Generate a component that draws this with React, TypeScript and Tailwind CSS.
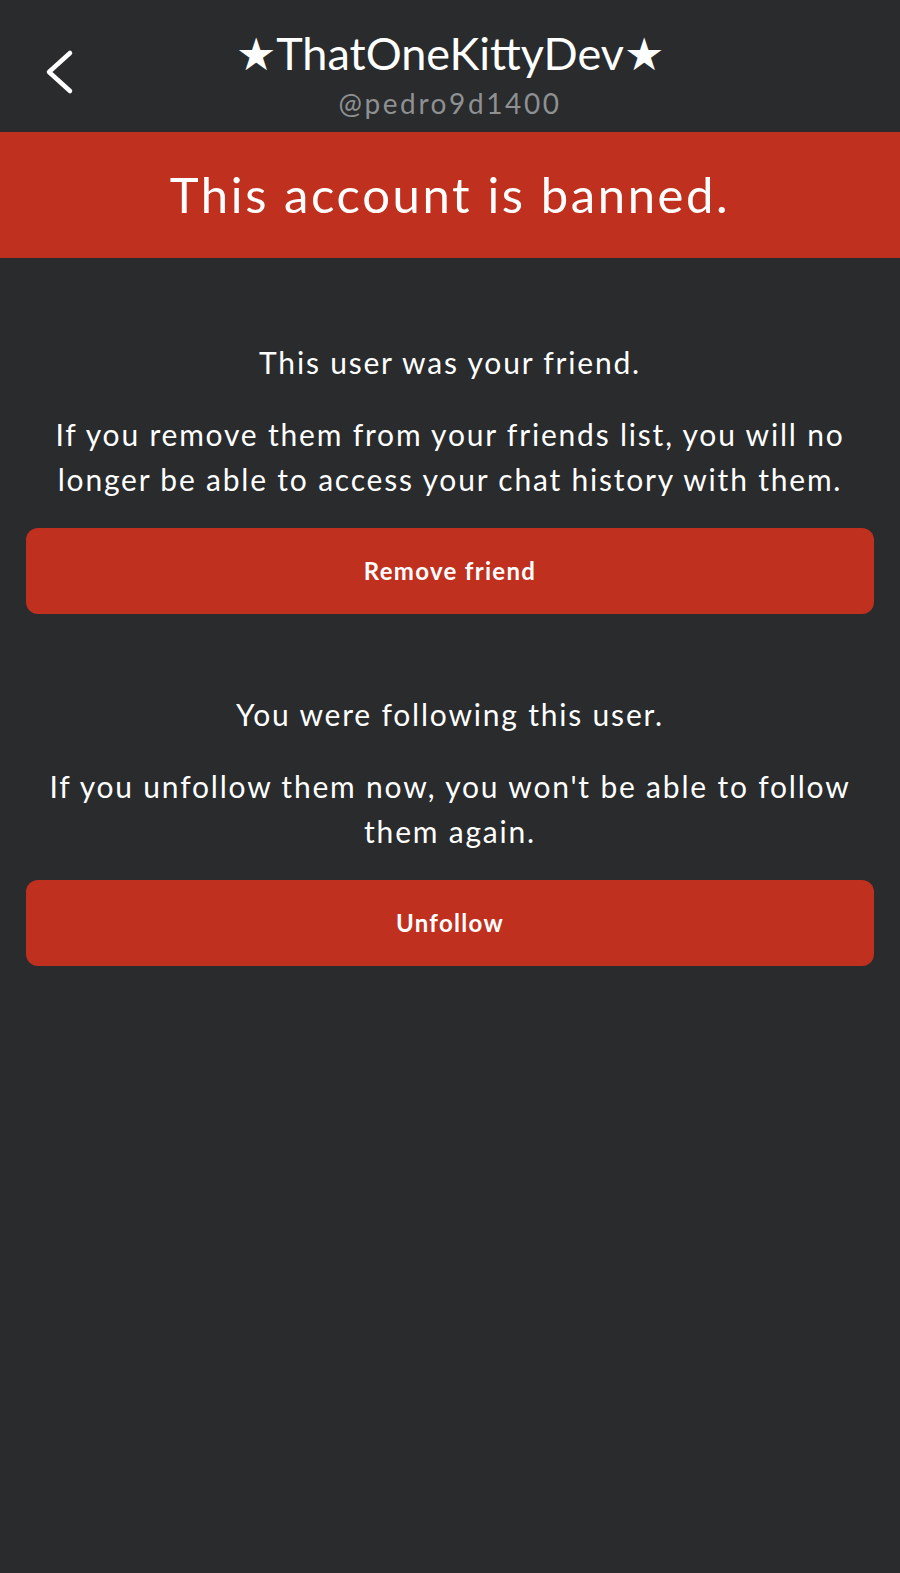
type Section = {
    title: string;
    body: string;
    action: string;
};

const sections: Section[] = [
    {
        title: 'This user was your friend.',
        body: 'If you remove them from your friends list, you will no longer be able to access your chat history with them.',
        action: 'Remove friend',
    },
    {
        title: 'You were following this user.',
        body: "If you unfollow them now, you won't be able to follow them again.",
        action: 'Unfollow',
    },
];

export default function App() {
    return (
        <div
            className="min-h-[1573px] bg-[#292b2d] text-white"
            style={{ fontFamily: 'Lato, "Noto Sans", sans-serif' }}
        >
            {/* Header */}
            <div className="relative flex h-[132px] flex-col items-center pt-[26px]">
                <button className="absolute left-0 top-0 text-white">
                    <svg width="100" height="132" viewBox="0 0 100 132" fill="none">
                        <polyline
                            points="70,53 49,72 70,91"
                            stroke="white"
                            strokeWidth="4.5"
                            strokeLinecap="round"
                            strokeLinejoin="round"
                        />
                    </svg>
                </button>
                <h1 className="text-[45px] leading-[54px]">★ThatOneKittyDev★</h1>
                <p className="mt-[6px] text-[28px] leading-[34px] tracking-[2.6px] text-[#8e9092]">
                    @pedro9d1400
                </p>
            </div>

            {/* Banned banner */}
            <div className="flex h-[126px] items-center justify-center bg-[#c0301f]">
                <p className="text-[49px] tracking-[2.6px]">This account is banned.</p>
            </div>

            {/* Sections */}
            <div className="flex flex-col gap-[78px] px-[26px] pt-[82px]">
                {sections.map((s) => (
                    <div key={s.action} className="flex flex-col items-center">
                        <p className="text-[30px] leading-[45px] tracking-[1.8px]">
                            {s.title}
                        </p>
                        <p className="mt-[27px] text-center text-[30px] leading-[45px] tracking-[1.8px]">
                            {s.body}
                        </p>
                        <button className="mt-[26px] flex h-[86px] w-full items-center justify-center rounded-[12px] bg-[#c0301f] text-[24px] font-bold tracking-[1.3px]">
                            {s.action}
                        </button>
                    </div>
                ))}
            </div>
        </div>
    );
}
